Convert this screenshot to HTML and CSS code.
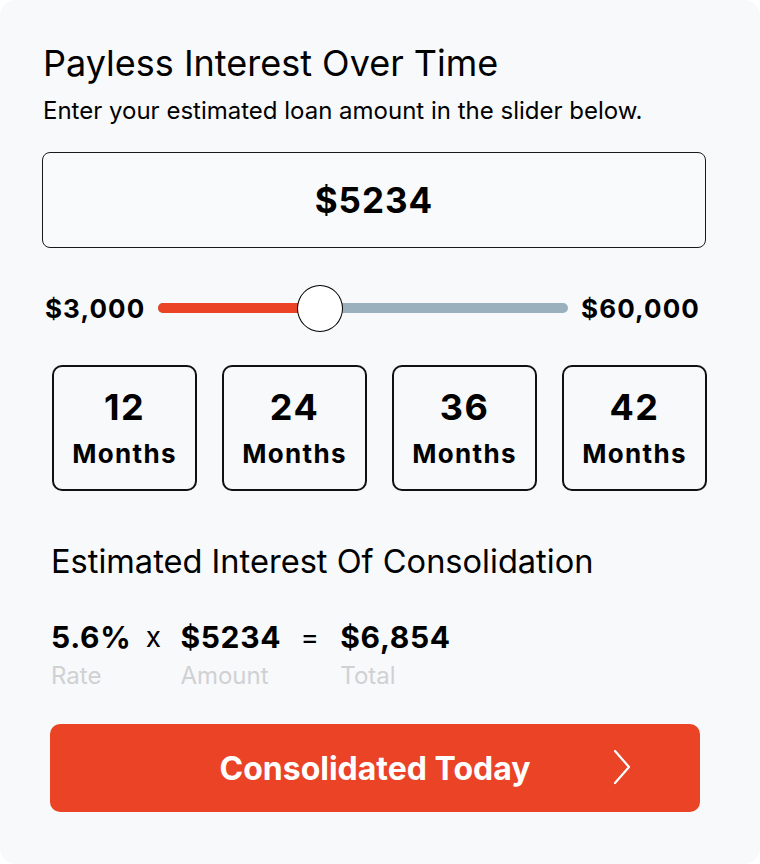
FILE: index.html
```html
<!DOCTYPE html>
<html>
<head>
<meta charset="utf-8">
<link rel="stylesheet" href="styles.css">
</head>
<body>
<div class="card">
  <h1 class="title">Payless Interest Over Time</h1>
  <p class="subtitle">Enter your estimated loan amount in the slider below.</p>
  <div class="amount-box">$5234</div>
  <div class="slider-row">
    <span class="range-label">$3,000</span>
    <div class="track">
      <div class="fill" style="width: 39.5%"></div>
      <div class="thumb" style="left: 39.5%"></div>
    </div>
    <span class="range-label">$60,000</span>
  </div>
  <div class="months">
    <div class="month"><span class="num">12</span><span class="unit">Months</span></div>
    <div class="month"><span class="num">24</span><span class="unit">Months</span></div>
    <div class="month"><span class="num">36</span><span class="unit">Months</span></div>
    <div class="month"><span class="num">42</span><span class="unit">Months</span></div>
  </div>
  <h2 class="est-title">Estimated Interest Of Consolidation</h2>
  <div class="formula">
    <div class="term"><span class="val">5.6%</span><span class="lbl">Rate</span></div>
    <span class="op op1">x</span>
    <div class="term"><span class="val">$5234</span><span class="lbl">Amount</span></div>
    <span class="op op2">=</span>
    <div class="term"><span class="val">$6,854</span><span class="lbl">Total</span></div>
  </div>
  <button class="cta">
    <span class="cta-text">Consolidated Today</span>
    <svg class="chev" width="18" height="36" viewBox="0 0 18 36"><path d="M2 2 L16 18 L2 34" fill="none" stroke="#fff" stroke-width="2.2" stroke-linecap="round" stroke-linejoin="round"/></svg>
  </button>
</div>
</body>
</html>
```
FILE: styles.css
```css
* { box-sizing: border-box; }
html, body { margin: 0; padding: 0; background: #ffffff; }
body { font-family: Inter, "Noto Sans", sans-serif; color: #000; }
.card {
  width: 760px;
  height: 864px;
  background: #f8f9fb;
  border-radius: 16px;
  padding: 41px 54px 0 42px;
}
.title {
  margin: 0 0 0 1px;
  font-size: 36px;
  font-weight: 400;
  line-height: 44px;
}
.subtitle {
  margin: 11px 0 0 1px;
  font-size: 24px;
  line-height: 30px;
  font-weight: 400;
}
.amount-box {
  margin-top: 26px;
  height: 96px;
  border: 1.5px solid #1a1a1a;
  border-radius: 8px;
  display: flex;
  align-items: center;
  justify-content: center;
  font-size: 35px;
  font-weight: 700;
  letter-spacing: 1px;
  background: #f9fafb;
}
.slider-row {
  margin-top: 37px;
  display: flex;
  align-items: center;
  gap: 13px;
  padding: 0 6px 0 3px;
  height: 46px;
}
.range-label {
  font-size: 26px;
  font-weight: 700;
  letter-spacing: 1.1px;
}
.track {
  position: relative;
  flex: 1;
  height: 10px;
  border-radius: 5px;
  background: #9ab0bd;
}
.fill {
  height: 100%;
  background: #ea4325;
  border-radius: 5px 0 0 5px;
}
.thumb {
  position: absolute;
  top: 50%;
  width: 46px;
  height: 47px;
  margin-left: -23px;
  margin-top: -23.5px;
  border-radius: 50%;
  background: #fff;
  border: 1.5px solid #000;
}
.months {
  margin-top: 34px;
  display: flex;
  gap: 25px;
  padding-left: 10px;
  margin-right: -1px;
}
.month {
  width: 145px;
  height: 126px;
  border: 2px solid #111;
  border-radius: 10px;
  display: flex;
  flex-direction: column;
  align-items: center;
  justify-content: center;
}
.num { font-size: 36px; font-weight: 700; line-height: 42px; letter-spacing: 1.5px; }
.unit { font-size: 26px; font-weight: 700; line-height: 32px; letter-spacing: 1.3px; margin-top: 10px; }
.est-title {
  margin: 50px 0 0 9px;
  font-size: 32.6px;
  font-weight: 400;
  line-height: 40px;
}
.formula {
  margin: 38px 0 0 9px;
  display: flex;
  align-items: flex-start;
}
.term { display: flex; flex-direction: column; }
.val { font-size: 30px; font-weight: 700; line-height: 36px; letter-spacing: 0.7px; }
.lbl { font-size: 24px; line-height: 30px; color: #d0d1d3; margin-top: 6px; }
.op { font-size: 28px; line-height: 36px; text-align: center; }
.op1 { width: 49px; padding-right: 5px; }
.op2 { width: 59px; padding-right: 2px; }
.cta {
  margin: 33px 0 0 8px;
  width: 650px;
  height: 88px;
  border: none;
  border-radius: 10px;
  background: #ea4325;
  color: #fff;
  font-family: Inter, "Noto Sans", sans-serif;
  font-size: 32px;
  font-weight: 700;
  position: relative;
  display: flex;
  align-items: center;
  justify-content: center;
  padding: 0;
}
.chev {
  position: absolute;
  left: 563px;
  top: 25px;
}
```
